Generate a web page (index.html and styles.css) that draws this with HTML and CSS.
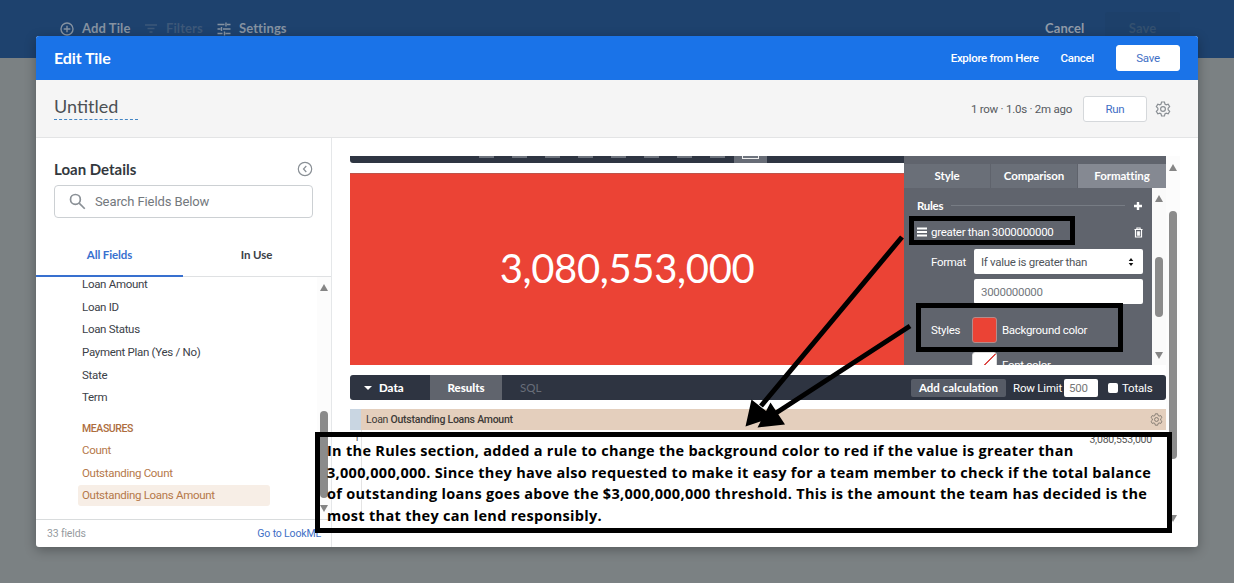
FILE: index.html
```
<!DOCTYPE html>
<html lang="en">
<head>
<meta charset="utf-8">
<title>Edit Tile</title>
<link rel="stylesheet" href="styles.css">
</head>
<body>
<header class="page-bar">
  <svg class="pi add" viewBox="0 0 14 14"><circle cx="7" cy="7" r="6"/><path d="M7 3.7v6.6M3.7 7h6.6"/></svg>
  <span class="pt t-add">Add Tile</span>
  <svg class="pi filt" viewBox="0 0 14 14"><path d="M1 3h12M3.5 6.5h7M5.5 10h3"/></svg>
  <span class="pt dim t-filt">Filters</span>
  <svg class="pi sett" viewBox="0 0 14 14"><path d="M0.5 2.5h7M10 2.5h3.500M9 0.500v4M0.500 7h3M6 7h7.500M4.500 5v4M0.500 11.500h5M8.500 11.500h5M7.500 9.500v4"/></svg>
  <span class="pt t-sett">Settings</span>
  <span class="grow"></span>
  <span class="pt t-cancel">Cancel</span>
  <span class="ghost">Save</span>
</header>

<section class="dialog">
  <header class="dlg-head">
    <h1>Edit Tile</h1>
    <span class="grow"></span>
    <a class="h-link explore">Explore from Here</a>
    <a class="h-link hcancel">Cancel</a>
    <button class="btn save"><span>Save</span></button>
  </header>
  <div class="title-bar">
    <div class="name"><span>Untitled</span></div>
    <span class="grow"></span>
    <span class="stats">1 row · 1.0s · 2m ago</span>
    <button class="btn run"><span>Run</span></button>
    <svg class="gear" viewBox="0 0 24 24"><path d="M9.800 1.500h4.400l.7 3.100 1.900 1.100 3-1 2.200 3.800-2.300 2.200v2.600l2.300 2.200-2.200 3.800-3-1-1.900 1.100-.7 3.100H9.800l-.7-3.100-1.900-1.100-3 1L2 15.500l2.300-2.200v-2.600L2 8.500l2.200-3.800 3 1 1.900-1.100z"/><circle cx="12" cy="12" r="3.600"/></svg>
  </div>
  <div class="dlg-body">
    <aside class="side">
      <div class="side-top">
        <h2>Loan Details</h2>
        <svg class="collapse" viewBox="0 0 16 16"><circle cx="8" cy="8" r="6.700"/><path d="M9.300 5 6.500 8l2.800 3"/></svg>
      </div>
      <div class="search">
        <svg viewBox="0 0 18 18"><circle cx="6.800" cy="6.800" r="5.200"/><path d="m10.700 10.700 6 6"/></svg>
        <span>Search Fields Below</span>
      </div>
      <nav class="tabs"><span class="tab on"><b>All Fields</b></span><span class="tab"><b>In Use</b></span></nav>
      <div class="list-wrap">
        <ul class="list">
          <li><span class="f1">Loan Amount</span></li>
          <li><span>Loan ID</span></li>
          <li><span>Loan Status</span></li>
          <li><span>Payment Plan (Yes / No)</span></li>
          <li><span>State</span></li>
          <li><span>Term</span></li>
          <li class="group">MEASURES</li>
          <li class="m"><span>Count</span></li>
          <li class="m"><span>Outstanding Count</span></li>
          <li class="m sel"><span>Outstanding Loans Amount</span></li>
        </ul>
        <div class="sb side-sb"><i class="up"></i><i class="thumb"></i><i class="down"></i></div>
      </div>
      <footer class="side-foot"><span>33 fields</span><a>Go to LookML</a></footer>
    </aside>
    <main class="main">
      <div class="content">
        <div class="vis">
          <div class="vis-left">
            <div class="strip"><i></i><i></i><i></i><i></i><i></i><i></i><i></i><i></i><i class="cur"></i></div>
            <div class="single"><span>3,080,553,000</span></div>
          </div>
          <div class="panel">
            <div class="p-strip"></div>
            <div class="p-tabs"><span>Style</span><span>Comparison</span><span class="on">Formatting</span></div>
            <div class="p-row">
              <div class="p-body">
                <div class="rules"><span>Rules</span><hr><svg viewBox="0 0 10 10"><path d="M5 1v8M1 5h8"/></svg></div>
                <div class="rule"><svg class="bars" viewBox="0 0 10 10"><path d="M0 1.500h10M0 5h10M0 8.500h10"/></svg><span>greater than 3000000000</span><svg class="trash" viewBox="0 0 10 12"><path d="M.5 2.700h9M3.200 2.500V1h3.600v1.500M1.600 3v8h6.800V3M3.700 4.500v5M5 4.500v5M6.300 4.500v5"/></svg></div>
                <div class="fld"><label>Format</label><div class="inp"><span>If value is greater than</span><svg viewBox="0 0 6 8"><path d="M3 0 5.300 3H.7zM3 8 .7 5h4.600z"/></svg></div></div>
                <div class="fld second"><label></label><div class="inp val"><span>3000000000</span></div></div>
                <div class="styles"><label>Styles</label><i class="swatch"></i><span>Background color</span></div>
                <div class="styles font"><label></label><i class="swatch none"></i><span>Font color</span></div>
              </div>
              <div class="sb p-sb"><i class="up"></i><i class="thumb"></i><i class="down"></i></div>
            </div>
          </div>
        </div>
        <div class="data-bar">
          <span class="d-data"><i></i><b>Data</b></span><span class="d-res"><b>Results</b></span><span class="d-sql">SQL</span>
          <span class="grow"></span>
          <span class="add-calc">Add calculation</span><span class="limit">Row Limit</span><span class="num">500</span><i class="check"></i><span class="totals">Totals</span>
        </div>
        <div class="th"><i></i><span>Loan <b>Outstanding Loans Amount</b></span><span class="grow"></span>
          <svg class="gear" viewBox="0 0 24 24"><path d="M9.800 1.500h4.400l.7 3.100 1.900 1.100 3-1 2.200 3.800-2.300 2.200v2.600l2.300 2.200-2.200 3.800-3-1-1.900 1.100-.7 3.100H9.800l-.7-3.100-1.900-1.100-3 1L2 15.500l2.300-2.200v-2.600L2 8.500l2.200-3.800 3 1 1.900-1.100z"/><circle cx="12" cy="12" r="3.600"/></svg></div>
        <div class="td"><i>1</i><span>3,080,553,000</span></div>
      </div>
      <div class="sb main-sb"><i class="up"></i><i class="thumb"></i><i class="down"></i></div>
    </main>
  </div>
</section>

<div class="mark rule-mark"></div>
<div class="mark style-mark"></div>
<svg class="arrows" viewBox="0 0 1234 583">
  <path class="ln" d="M902 237 761 406M910 326 776 413"/>
  <path d="m745.500 426.500 6-27 22 17.500zM757.500 427.500 770.500 402.500 785 424.500z"/>
</svg>
<div class="note">
  <div class="l1">In the Rules section, added a rule to change the background color to red if the value is greater than</div>
  <div class="l2">3,000,000,000. Since they have also requested to make it easy for a team member to check if the total balance</div>
  <div class="l3">of outstanding loans goes above the $3,000,000,000 threshold. This is the amount the team has decided is the</div>
  <div class="l4">most that they can lend responsibly.</div>
</div>
</body>
</html>
```
FILE: styles.css
```
* { box-sizing: border-box; }
body { margin: 0; width: 1234px; height: 583px; overflow: hidden; background: #7b8183; font-family: Roboto, "Liberation Sans", sans-serif; font-size: 12px; color: #3b4148; position: relative; white-space: nowrap; }
h1, h2, ul { margin: 0; padding: 0; list-style: none; }
svg { display: block; flex: none; fill: none; stroke: currentColor; }
i { font-style: normal; }
.grow { flex: 1; }

.page-bar { height: 58px; background: #1e426e; display: flex; align-items: flex-start; padding: 20px 54px 0 60px; color: #8592a1; font: bold 13px/17px Lato, sans-serif; letter-spacing: .1px; }
.pi { width: 14px; height: 14px; margin-top: 2px; stroke-width: 1.4; }
.filt, .dim { color: #3d5879; }
.t-add { margin-left: 8px; width: 62px; }
.t-filt { margin-left: 8px; width: 51px; }
.t-sett { margin-left: 8px; }
.t-cancel { width: 60px; color: #919ba8; }
.ghost { width: 75px; height: 30px; margin-top: -8px; padding-top: 8px; text-align: center; color: #34506f; background: #1d406a; border-radius: 3px; }

.dialog { position: absolute; left: 36px; top: 36px; width: 1162px; height: 511px; background: #fff; border-radius: 3px; box-shadow: 0 3px 12px rgba(0,0,0,.3); overflow: hidden; display: flex; flex-direction: column; }
.dlg-head { height: 44px; flex: none; background: #1a73e8; color: #fff; display: flex; align-items: center; padding: 0 18px; }
.dlg-head h1 { font: bold 16px/20px Lato, sans-serif; letter-spacing: -.1px; }
.h-link { font-weight: 500; font-size: 11.5px; letter-spacing: -.3px; }
.hcancel { margin: 0 22px; }
.btn { width: 64px; height: 26px; padding: 0; border: 1px solid #d5d8db; border-radius: 3px; background: #fff; color: #3f6fc6; font: 11.5px Roboto, sans-serif; letter-spacing: -.3px; }
.btn.save { border-color: #fff; }
.title-bar { height: 58px; flex: none; background: #f5f5f5; border-bottom: 1px solid #e3e4e5; display: flex; align-items: center; padding: 0 27px 0 18px; }
.name { width: 84px; height: 25px; margin-top: -2px; border-bottom: 1px dashed #4285c4; font: 18px/23px Lato, sans-serif; color: #4c5054; }
.stats { font-size: 11.5px; letter-spacing: -.25px; color: #555a5f; margin-right: 11px; }
.gear { width: 16px; height: 16px; color: #8a8f94; stroke-width: 1.8; margin-left: 8px; }
.dlg-body { flex: 1; display: flex; min-height: 0; }

.side { width: 296px; border-right: 1px solid #e5e7e9; display: flex; flex-direction: column; flex: none; }
.side-top { height: 47px; padding: 14px 18px 0; display: flex; align-items: center; justify-content: space-between; }
.side-top h2 { font: bold 15px/20px Lato, sans-serif; color: #33383d; }
.collapse { width: 16px; height: 16px; color: #8a9096; stroke-width: 1.200; }
.search { height: 33px; margin: 0 18px; border: 1px solid #ccd0d3; border-radius: 4px; display: flex; align-items: center; font-size: 13px; letter-spacing: -.1px; color: #73787d; padding-left: 14px; gap: 9px; }
.search svg { width: 17px; height: 17px; stroke-width: 1.800; color: #8a9096; }
.tabs { height: 59px; display: flex; border-bottom: 1px solid #dfe1e3; flex: none; }
.tab { width: 147px; padding-top: 29px; text-align: center; font: 11.5px/15px Lato, sans-serif; letter-spacing: -.1px; }
.tab.on { border-bottom: 2px solid #3870cf; color: #3870cf; height: 59px; }
.list-wrap { height: 242px; flex: none; display: flex; justify-content: space-between; overflow: hidden; }
.list { width: 234px; padding-left: 42px; margin-top: -4px; }
.list li { height: 22.700px; line-height: 23.4px; padding-left: 4px; font-size: 11.5px; letter-spacing: -.3px; }
.list .group { height: 22px; margin-top: 8px; color: #ad6d3d; font-size: 10.5px; line-height: 24px; font-weight: 500; letter-spacing: -.4px; }
.list .m { color: #b57849; }
.list .sel { height: 21px; line-height: 21px; background: #f7eee6; border-radius: 3px; width: 192px; margin-top: .5px; }
.side-foot { border-top: 1px solid #d9dcdd; flex: 1; display: flex; align-items: center; justify-content: space-between; padding: 0 10px 0 11px; font-size: 10.5px; letter-spacing: -.15px; color: #969ba0; }
.side-foot a { color: #3f6fc6; }

.sb { width: 14px; display: flex; flex-direction: column; align-items: center; background: #fcfcfc; flex: none; }
.sb .up { border: 4px solid transparent; border-top: 0; border-bottom: 7px solid #858585; }
.sb .down { border: 4px solid transparent; border-bottom: 0; border-top: 7px solid #858585; }
.sb .thumb { width: 8px; border-radius: 4px; background: #8b8b8b; }
.side-sb { padding-top: 7px; }
.side-sb .thumb { margin: 120px 0 7px; height: 87px; }

.main { flex: 1; display: flex; padding: 18px 18px 24px 18px; }
.content { width: 816px; display: flex; flex-direction: column; flex: none; }
.vis { display: flex; height: 209px; }
.vis-left { width: 554px; display: flex; flex-direction: column; justify-content: space-between; }
.strip { height: 7px; background: #2e3542; border-radius: 0 0 0 3px; display: flex; padding-left: 120px; }
.strip i { width: 33px; display: flex; justify-content: center; }
.strip i::before { content: ""; width: 15px; height: 2px; background: #6d737d; }
.strip .cur { background: #676c76; }
.strip .cur::before { border: 1px solid #eee; border-top: 0; }
.single { height: 192px; background: #eb4335; display: flex; align-items: center; justify-content: center; color: #fff; font: 40px/48px Lato, sans-serif; letter-spacing: -.35px; padding-bottom: 4px; border-top: 1px solid #bd5349; }
.panel { width: 262px; background: #60646d; color: #fff; display: flex; flex-direction: column; overflow: hidden; font-size: 11.5px; letter-spacing: -.3px; }
.p-strip { height: 8px; flex: none; }
.p-tabs { display: flex; height: 24px; flex: none; font: bold 11.500px/24px Lato, sans-serif; letter-spacing: -.1px; text-align: center; background: #6a6f78; }
.p-tabs span { width: 87px; border-right: 1px solid #5f636c; }
.p-tabs .on { width: 88px; background: #858992; border: 0; }
.p-row { flex: 1; display: flex; min-height: 0; }
.p-body { width: 248px; padding: 9px 9px 0 13px; overflow: hidden; }
.rules { display: flex; align-items: center; height: 17px; margin-bottom: 1px; font: bold 11.5px Lato, sans-serif; }
.rules hr { flex: 1; margin: 0 8px; border: 0; border-top: 1px solid #777c84; }
.rules svg { width: 10px; height: 10px; stroke-width: 2.400; }
.rule { display: flex; align-items: center; height: 34px; gap: 4px; }
.bars { width: 10px; height: 10px; stroke-width: 1.800; }
.trash { width: 9px; height: 11px; margin-left: auto; stroke-width: 1.200; }
.fld { display: flex; align-items: center; height: 25px; padding-left: 14px; }
.fld label { width: 43px; }
.second { margin-top: 5px; }
.inp { width: 169px; height: 25px; background: #fff; border-radius: 2px; color: #50555b; display: flex; align-items: center; justify-content: space-between; padding: 0 9px 0 7px; }
.inp.val { color: #73787d; }
.inp svg { width: 6px; height: 8px; fill: #111; stroke: none; }
.styles { display: flex; align-items: center; padding-left: 14px; height: 25px; margin-top: 13px; }
.styles label { width: 41px; }
.styles.font { margin-top: 10px; }
.styles span { margin-left: 5px; }
.swatch { width: 25px; height: 26px; border: 1px solid #b58b8a; border-radius: 3px; background: #eb4335; }
.swatch.none { border-color: #ddd; background: linear-gradient(135deg, #fff 47%, #dd4b48 47% 52%, #fff 52%); }
.p-sb { padding-top: 7px; background: #fafafa; }
.p-sb .thumb { height: 60px; margin: 55px 0 35px; }
.data-bar { height: 25px; margin-top: 10px; background: #2e3441; border-radius: 3px; display: flex; align-items: center; color: #fff; flex: none; font: bold 11.500px/25px Lato, sans-serif; }
.d-data { width: 80px; padding-left: 14px; display: flex; align-items: center; gap: 7px; }
.d-data i { border: 4px solid transparent; border-bottom: 0; border-top-color: #fff; }
.d-res { width: 72px; text-align: center; background: #60646d; }
.d-sql { margin-left: 18px; color: #686e79; font-weight: normal; }
.add-calc { width: 95px; height: 18px; line-height: 18px; text-align: center; background: #565b66; border-radius: 2px; }
.limit, .totals, .num { font: 11.5px/18px Roboto, sans-serif; letter-spacing: -.2px; }
.limit { width: 51px; margin-left: 7px; }
.num { width: 34px; height: 18px; background: #fff; color: #777; border-radius: 2px; padding-left: 5px; }
.check { width: 10px; height: 10px; margin: 0 4px 0 10px; border-radius: 2px; background: #fff; }
.totals { width: 44px; }
.th { height: 21px; margin-top: 9px; background: #e4cfbd; display: flex; align-items: center; font-size: 10.5px; letter-spacing: -.25px; color: #3d3a37; flex: none; }
.th i { width: 11px; height: 21px; background: #c9d6e2; margin-right: 5px; }
.th b { font-weight: 500; }
.th .gear { width: 13px; height: 13px; color: #847b72; margin-right: 3px; }
.td { height: 20px; display: flex; justify-content: space-between; font-size: 10.5px; letter-spacing: -.2px; line-height: 19px; padding: 0 14px 0 0; color: #555; }
.td i { width: 12px; height: 92px; border-right: 1px solid #e4e4e4; padding-left: 4px; font-size: 10px; line-height: 16px; }
.main-sb { padding-top: 8px; }
.main-sb .thumb { height: 248px; margin: 40px 0 56px; }

.mark { position: absolute; border: 5px solid #000; }
.rule-mark { left: 909px; top: 216px; width: 166px; height: 29px; }
.style-mark { left: 916px; top: 303px; width: 207px; height: 49px; }
.arrows { position: absolute; left: 0; top: 0; width: 1234px; height: 583px; fill: #000; stroke: none; }
.arrows .ln { stroke: #000; stroke-width: 5; fill: none; }
.note { position: absolute; left: 315px; top: 432px; width: 857px; height: 101px; border: 5px solid #000; padding: 3px 0 0 7px; color: #000; font: bold 14.5px/21.500px "Open Sans", sans-serif; letter-spacing: .3px; }
```
